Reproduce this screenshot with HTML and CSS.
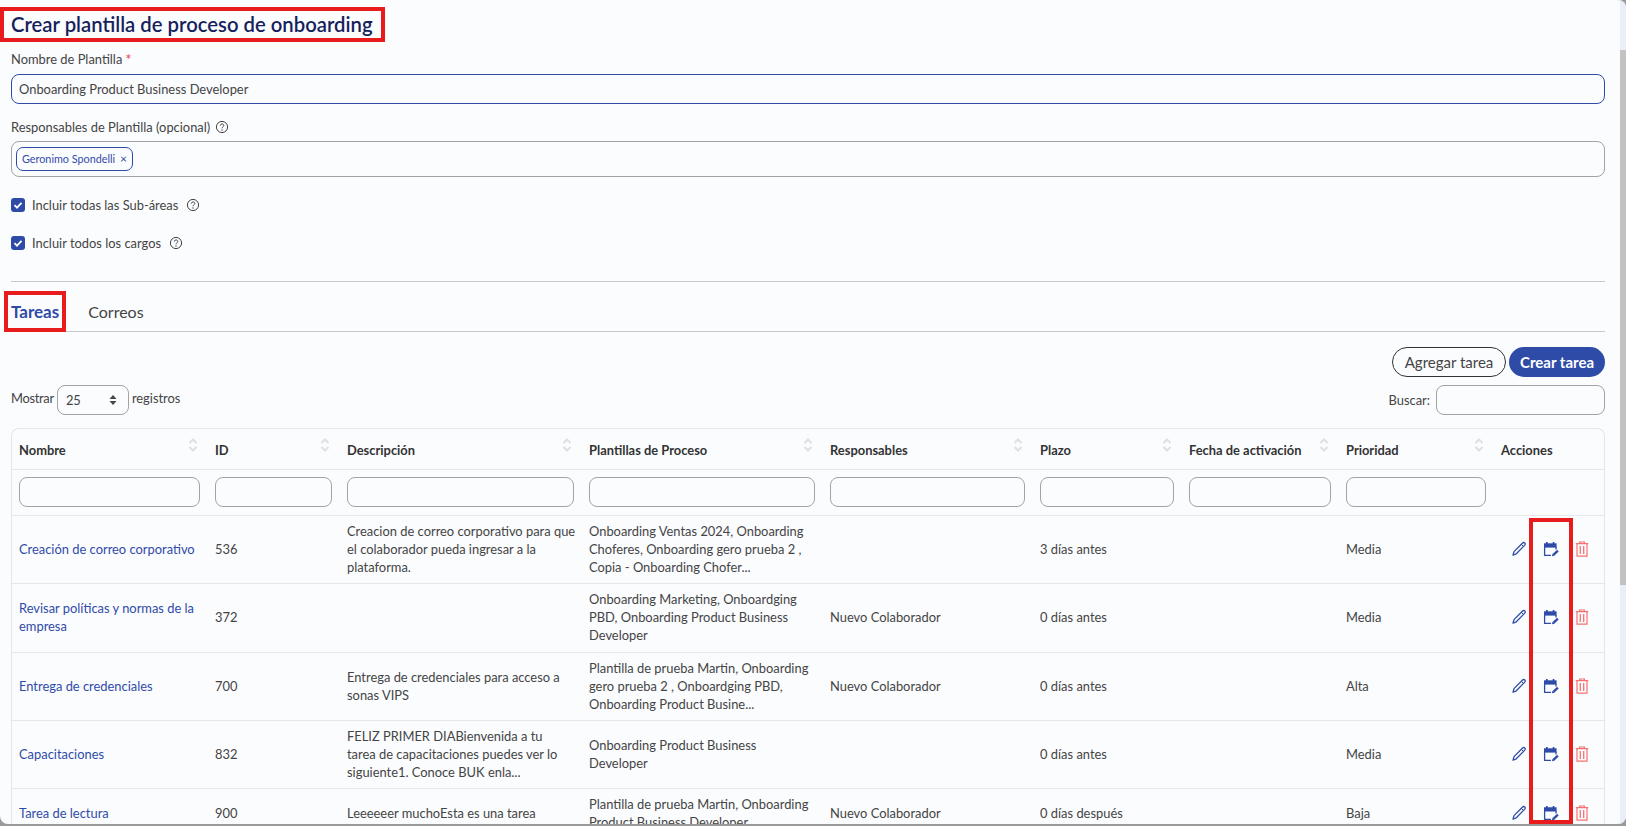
FILE: index.html
```html
<!DOCTYPE html>
<html lang="es">
<head>
    <meta charset="UTF-8">
    <title>Crear plantilla de proceso de onboarding</title>
    <link rel="stylesheet" href="styles.css">
</head>
<body>

<svg class="defs" width="0" height="0">
    <symbol id="i-help" viewBox="0 0 14 14">
        <circle cx="7" cy="7" r="5.6" fill="none" stroke="currentColor" stroke-width="1"/>
        <path d="M5.300 5.600c0-2.200 3.500-2.200 3.500-.1 0 1.300-1.800 1.300-1.800 2.800" fill="none" stroke="currentColor" stroke-width="1"/>
        <circle cx="7" cy="10" r=".7" fill="currentColor"/>
    </symbol>
    <symbol id="i-sort" viewBox="0 0 10 14">
        <path d="M1.500 5 5 1.500 8.500 5" fill="none" stroke="#dfe0e3" stroke-width="2"/>
        <path d="M1.500 9 5 12.500 8.500 9" fill="none" stroke="#dfe0e3" stroke-width="2"/>
    </symbol>
    <symbol id="i-pencil" viewBox="0 0 16 16">
        <path d="M2 14.200 3 10.600 11.600 2c.7-.7 1.600-.7 2.200 0 .6.600.6 1.500 0 2.100L5.300 12.800Z" fill="none" stroke="currentColor" stroke-width="1.300" stroke-linejoin="round"/>
        <path d="M10.300 3.300 12.600 5.600" fill="none" stroke="currentColor" stroke-width="1"/>
    </symbol>
    <symbol id="i-calendar" viewBox="0 0 16 16">
        <path d="M1 2.300h12.600v4.300H1Z" fill="currentColor"/>
        <path d="M3 1h1.700v2H3ZM9.700 1h1.700v2H9.700Z" fill="currentColor"/>
        <path d="M1.600 6v8.300H8M13 6v2.400" fill="none" stroke="currentColor" stroke-width="1.300"/>
        <path d="M10.400 13.800 14.900 9.600" fill="none" stroke="currentColor" stroke-width="2.300"/>
        <path d="M9 15.200 9.400 12.800 11.400 14.700Z" fill="currentColor"/>
    </symbol>
    <symbol id="i-trash" viewBox="0 0 14 16">
        <path d="M.8 2.600h12.400M4.600 2.400V1h4.800v1.400" fill="none" stroke="currentColor" stroke-width="1.200"/>
        <path d="M2 2.800v12.300h10V2.800" fill="none" stroke="currentColor" stroke-width="1.200"/>
        <path d="M5.300 5v8M8.700 5v8" fill="none" stroke="currentColor" stroke-width="1.300"/>
    </symbol>
</svg>

<div class="window">
    <main class="content">
        <h1 class="title">Crear plantilla de proceso de onboarding</h1>

        <label class="field-label">Nombre de Plantilla <span class="required">*</span></label>
        <div class="text-input is-focused">Onboarding Product Business Developer</div>

        <label class="field-label field-label-next">Responsables de Plantilla (opcional) <svg class="help"><use href="#i-help"/></svg></label>
        <div class="tag-input">
            <span class="tag">Geronimo Spondelli <span class="tag-x">×</span></span>
        </div>

        <div class="check-row first-check">
            <span class="checkbox"><svg viewBox="0 0 14 14" width="14" height="14"><path d="M3.500 7.200 6 9.600 10.500 4.800" fill="none" stroke="#fff" stroke-width="1.800"/></svg></span>
            Incluir todas las Sub-áreas <svg class="help help-gap"><use href="#i-help"/></svg>
        </div>
        <div class="check-row">
            <span class="checkbox"><svg viewBox="0 0 14 14" width="14" height="14"><path d="M3.500 7.200 6 9.600 10.500 4.800" fill="none" stroke="#fff" stroke-width="1.800"/></svg></span>
            Incluir todos los cargos <svg class="help help-gap"><use href="#i-help"/></svg>
        </div>

        <hr class="divider">

        <div class="tabs">
            <span class="tab active">Tareas</span>
            <span class="tab">Correos</span>
        </div>

        <div class="actions-bar">
            <button type="button" class="btn btn-outline">Agregar tarea</button>
            <button type="button" class="btn btn-primary">Crear tarea</button>
        </div>

        <div class="table-tools">
            <div class="length">
                <span class="length-text length-first">Mostrar</span>
                <div class="select">25 <svg width="8" height="12" viewBox="0 0 8 12"><path d="M4 1 7.500 5H.5ZM4 11 .5 7h7Z" fill="#444"/></svg></div>
                <span class="length-text">registros</span>
            </div>
            <div class="search">Buscar: <div class="search-box"></div></div>
        </div>

        <div class="table-wrap">
            <table class="tasks">
                <colgroup>
                    <col class="c-name"><col class="c-id"><col class="c-desc"><col class="c-tpl"><col class="c-resp">
                    <col class="c-term"><col class="c-date"><col class="c-prio"><col class="c-act">
                </colgroup>
                <thead>
                    <tr class="head-row">
                        <th><div class="th-in">Nombre <svg class="sort"><use href="#i-sort"/></svg></div></th>
                        <th><div class="th-in">ID <svg class="sort"><use href="#i-sort"/></svg></div></th>
                        <th><div class="th-in">Descripción <svg class="sort"><use href="#i-sort"/></svg></div></th>
                        <th><div class="th-in">Plantillas de Proceso <svg class="sort"><use href="#i-sort"/></svg></div></th>
                        <th><div class="th-in">Responsables <svg class="sort"><use href="#i-sort"/></svg></div></th>
                        <th><div class="th-in">Plazo <svg class="sort"><use href="#i-sort"/></svg></div></th>
                        <th><div class="th-in">Fecha de activación <svg class="sort"><use href="#i-sort"/></svg></div></th>
                        <th><div class="th-in">Prioridad <svg class="sort"><use href="#i-sort"/></svg></div></th>
                        <th><div class="th-in">Acciones</div></th>
                    </tr>
                    <tr class="filter-row">
                        <td><div class="filter"></div></td>
                        <td><div class="filter"></div></td>
                        <td><div class="filter"></div></td>
                        <td><div class="filter"></div></td>
                        <td><div class="filter"></div></td>
                        <td><div class="filter"></div></td>
                        <td><div class="filter"></div></td>
                        <td><div class="filter"></div></td>
                        <td></td>
                    </tr>
                </thead>
                <tbody>
                    <tr>
                        <td><a class="link">Creación de correo corporativo</a></td>
                        <td>536</td>
                        <td>Creacion de correo corporativo para que<br>el colaborador pueda ingresar a la<br>plataforma.</td>
                        <td>Onboarding Ventas 2024, Onboarding Choferes, Onboarding gero prueba 2 , Copia - Onboarding Chofer...</td>
                        <td></td>
                        <td>3 días antes</td>
                        <td></td>
                        <td>Media</td>
                        <td><div class="row-actions"><svg class="ic-edit"><use href="#i-pencil"/></svg><svg class="ic-cal"><use href="#i-calendar"/></svg><svg class="ic-del"><use href="#i-trash"/></svg></div></td>
                    </tr>
                    <tr class="row-tall">
                        <td><a class="link">Revisar políticas y normas de la empresa</a></td>
                        <td>372</td>
                        <td></td>
                        <td>Onboarding Marketing, Onboardging PBD, Onboarding Product Business Developer</td>
                        <td>Nuevo Colaborador</td>
                        <td>0 días antes</td>
                        <td></td>
                        <td>Media</td>
                        <td><div class="row-actions"><svg class="ic-edit"><use href="#i-pencil"/></svg><svg class="ic-cal"><use href="#i-calendar"/></svg><svg class="ic-del"><use href="#i-trash"/></svg></div></td>
                    </tr>
                    <tr>
                        <td><a class="link">Entrega de credenciales</a></td>
                        <td>700</td>
                        <td>Entrega de credenciales para acceso a sonas VIPS</td>
                        <td>Plantilla de prueba Martin, Onboarding gero prueba 2 , Onboardging PBD, Onboarding Product Busine...</td>
                        <td>Nuevo Colaborador</td>
                        <td>0 días antes</td>
                        <td></td>
                        <td>Alta</td>
                        <td><div class="row-actions"><svg class="ic-edit"><use href="#i-pencil"/></svg><svg class="ic-cal"><use href="#i-calendar"/></svg><svg class="ic-del"><use href="#i-trash"/></svg></div></td>
                    </tr>
                    <tr>
                        <td><a class="link">Capacitaciones</a></td>
                        <td>832</td>
                        <td>FELIZ PRIMER DIABienvenida a tu<br>tarea de capacitaciones puedes ver lo<br>siguiente1. Conoce BUK enla...</td>
                        <td>Onboarding Product Business Developer</td>
                        <td></td>
                        <td>0 días antes</td>
                        <td></td>
                        <td>Media</td>
                        <td><div class="row-actions"><svg class="ic-edit"><use href="#i-pencil"/></svg><svg class="ic-cal"><use href="#i-calendar"/></svg><svg class="ic-del"><use href="#i-trash"/></svg></div></td>
                    </tr>
                    <tr class="last-row">
                        <td><a class="link">Tarea de lectura</a></td>
                        <td>900</td>
                        <td>Leeeeeer muchoEsta es una tarea</td>
                        <td>Plantilla de prueba Martin, Onboarding Product Business Developer</td>
                        <td>Nuevo Colaborador</td>
                        <td>0 días después</td>
                        <td></td>
                        <td>Baja</td>
                        <td><div class="row-actions"><svg class="ic-edit"><use href="#i-pencil"/></svg><svg class="ic-cal"><use href="#i-calendar"/></svg><svg class="ic-del"><use href="#i-trash"/></svg></div></td>
                    </tr>
                </tbody>
            </table>
        </div>
    </main>

    <div class="scrollbar"><div class="scrollbar-thumb"></div></div>
</div>

<!-- red annotation boxes drawn over the screenshot -->
<div class="mark mark-title"></div>
<div class="mark mark-tab"></div>
<div class="mark mark-col"></div>

</body>
</html>
```

FILE: styles.css
```css
* {
    box-sizing: border-box;
}

html, body {
    margin: 0;
    height: 826px;
    overflow: hidden;
}

body {
    position: relative;
    font-family: "Lato", "Noto Sans", sans-serif;
    font-size: 12.9px;
    line-height: 18px;
    color: #444;
    background-color: #9a9a9a;
}

.defs {
    position: absolute;
}

.window {
    display: flex;
    height: 824px;
    overflow: hidden;
    background-color: #fbfcfe;
    border-radius: 0 8px 8px 8px;
}

.content {
    flex: 1;
    min-width: 0;
    padding: 10px 15px 0 11px;
}

.scrollbar {
    width: 6px;
    background-color: #e9eef9;
}

.scrollbar-thumb {
    height: 535px;
    margin-top: 50px;
    background-color: #c2c2c2;
}

.title {
    margin: 0 0 12px;
    font-size: 20.3px;
    line-height: 28px;
    font-weight: 600;
    color: #161f5c;
}

.field-label {
    display: flex;
    align-items: center;
    gap: 3px;
    height: 18px;
}

.field-label-next {
    margin-top: 14px;
}

.required {
    font-size: 15px;
    color: #ef4444;
}

.help {
    width: 14px;
    height: 14px;
    margin-left: 2px;
    color: #444;
}

.help-gap {
    margin-left: 8px;
}

.text-input {
    height: 30px;
    margin-top: 6px;
    padding: 5px 7px;
    border: 1px solid #a3a3a3;
    border-radius: 8px;
}

.is-focused {
    border-color: #2f4ba8;
}

.tag-input {
    height: 36px;
    margin-top: 5px;
    padding: 5px 4px;
    border: 1px solid #a3a3a3;
    border-radius: 8px;
}

.tag {
    display: inline-block;
    height: 24px;
    padding: 0 5px;
    font-size: 10.8px;
    line-height: 22px;
    color: #2f4ba8;
    border: 1px solid #2f4ba8;
    border-radius: 7px;
}

.tag-x {
    margin-left: 2px;
    font-size: 12px;
}

.check-row {
    display: flex;
    align-items: center;
    height: 18px;
    margin-top: 20px;
}

.first-check {
    margin-top: 19px;
}

.checkbox {
    display: flex;
    width: 14px;
    height: 14px;
    margin-right: 7px;
    background-color: #2f4ba8;
    border-radius: 3px;
}

.divider {
    height: 1px;
    margin: 29px 0 0;
    border: 0;
    background-color: #c9c9c9;
}

.tabs {
    display: flex;
    align-items: baseline;
    gap: 29px;
    height: 50px;
    padding-top: 19px;
    font-size: 16px;
    line-height: 21px;
    border-bottom: 1px solid #c9c9c9;
}

.tab.active {
    font-size: 17px;
    font-weight: 700;
    color: #2f4ba8;
}

.actions-bar {
    display: flex;
    justify-content: flex-end;
    gap: 3px;
    margin-top: 15px;
}

.btn {
    height: 30px;
    padding: 0;
    font-family: inherit;
    font-size: 15px;
    border-radius: 15px;
}

.btn-outline {
    width: 114px;
    color: #444;
    background: transparent;
    border: 1px solid #333;
}

.btn-primary {
    width: 96px;
    font-weight: 700;
    color: #fff;
    background-color: #2f4ba8;
    border: 0;
}

.table-tools {
    display: flex;
    justify-content: space-between;
    align-items: center;
    height: 30px;
    margin-top: 8px;
}

.length, .search {
    display: flex;
    align-items: center;
    gap: 4px;
    line-height: 14px;
}

.length-text {
    margin-bottom: 4px;
}

.length-first {
    letter-spacing: -0.3px;
}

.length {
    gap: 3px;
}

.select {
    display: flex;
    justify-content: space-between;
    align-items: center;
    width: 72px;
    height: 30px;
    padding: 0 11px 0 8px;
    border: 1px solid #a3a3a3;
    border-radius: 8px;
}

.search-box {
    width: 169px;
    height: 30px;
    margin-left: 2px;
    border: 1px solid #a3a3a3;
    border-radius: 8px;
}

.table-wrap {
    margin-top: 13px;
    border: 1px solid #e4e6ea;
    border-bottom: 0;
    border-radius: 8px 8px 0 0;
}

.tasks {
    width: 100%;
    table-layout: fixed;
    border-collapse: collapse;
}

.c-name { width: 196px; }
.c-id { width: 132px; }
.c-desc { width: 242px; }
.c-tpl { width: 241px; }
.c-resp { width: 210px; }
.c-term { width: 149px; }
.c-date { width: 157px; }
.c-prio { width: 155px; }
.c-act { width: 111px; }

.tasks th {
    height: 40px;
    padding: 2px 7px 0;
    font-weight: 700;
    text-align: left;
    color: #333;
}

.th-in {
    display: flex;
    justify-content: space-between;
}

.sort {
    flex-shrink: 0;
    width: 10px;
    height: 14px;
    margin: -3px 3px 0 0;
}

.tasks td {
    padding: 6px 5px 7px 7px;
    vertical-align: middle;
    border-top: 1px solid #e4e6ea;
}

.tasks .filter-row td {
    height: 46px;
    padding: 7px 8px 7px 7px;
}

.filter {
    height: 30px;
    border: 1px solid #a3a3a3;
    border-radius: 8px;
}

.tasks tbody tr {
    height: 68px;
}

.tasks tbody .row-tall {
    height: 69px;
}

.tasks tbody .last-row {
    height: 50px;
}

.link {
    color: #2f4ba8;
}

.row-actions {
    display: flex;
    align-items: center;
    gap: 16px;
    margin-left: 10px;
}

.row-actions svg {
    flex-shrink: 0;
}

.ic-edit {
    width: 16px;
    height: 16px;
    color: #2f4ba8;
}

.ic-cal {
    width: 16px;
    height: 16px;
    color: #2f4ba8;
}

.ic-del {
    width: 14px;
    height: 16px;
    color: #f87171;
}

.mark {
    position: absolute;
    border: 4px solid #e81c1c;
}

.mark-title {
    left: 0;
    top: 7px;
    width: 385px;
    height: 35px;
}

.mark-tab {
    left: 4px;
    top: 291px;
    width: 62px;
    height: 41px;
}

.mark-col {
    left: 1529px;
    top: 518px;
    width: 44px;
    height: 306px;
}
```
